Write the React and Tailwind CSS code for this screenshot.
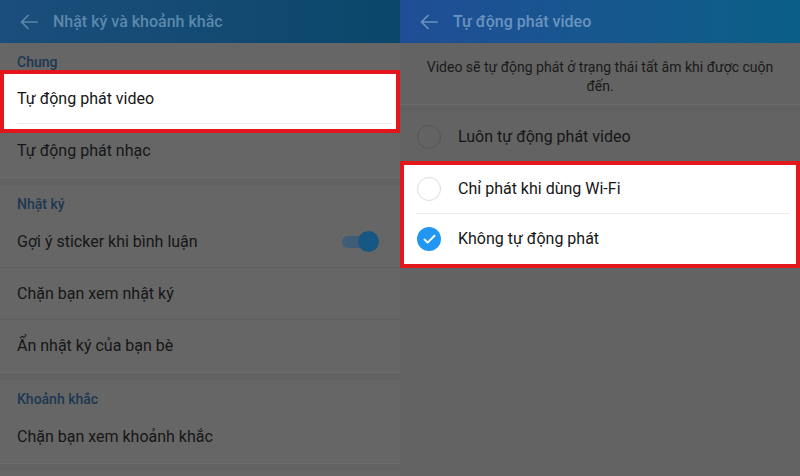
import { Check } from 'lucide-react'

const font = { fontFamily: 'Roboto, "Noto Sans", sans-serif' }

function BackArrow() {
  return (
    <svg width="18" height="16" viewBox="0 0 18 16" fill="none" stroke="currentColor" strokeWidth="1.7" strokeLinecap="round" strokeLinejoin="round">
      <path d="M17 8H1.5M8 1.5 1.5 8 8 14.5" />
    </svg>
  )
}

function Header({ title, tone }) {
  return (
    <div className={`flex h-[43px] shrink-0 items-center pl-[20px] ${tone}`}>
      <BackArrow />
      <span className="ml-[15px] text-[16px] font-medium">{title}</span>
    </div>
  )
}

function SectionLabel({ children, h }) {
  return (
    <div className={`${h} pl-[17px] pt-[9px] text-[14px] font-medium leading-5 text-[#1d3853]`}>{children}</div>
  )
}

function Row({ label, divider, children }) {
  return (
    <div className={`flex h-[52px] items-center justify-between pl-[17px] pr-[21px] ${divider ? 'border-b border-[#5f5f5f]' : ''}`}>
      <span className="text-[16px] text-[#161616]">{label}</span>
      {children}
    </div>
  )
}

function Gap() {
  return <div className="h-[8px] border-t border-[#6c6c6c] bg-[#626262]" />
}

function Radio({ checked, light }) {
  if (checked) {
    return (
      <span className="flex h-[24px] w-[24px] items-center justify-center rounded-full bg-[#2196f3]">
        <Check size={15} strokeWidth={3} className="text-white" />
      </span>
    )
  }
  return (
    <span className={`h-[24px] w-[24px] rounded-full border-[1.5px] ${light ? 'border-[#dcdcdc]' : 'border-[#555555]'}`} />
  )
}

function LeftPanel() {
  return (
    <div className="flex w-[400px] flex-col bg-[#666666]">
      <Header title="Nhật ký và khoảnh khắc" tone="bg-gradient-to-r from-[#1b4e7c] to-[#0a476b] text-[#5c88ab]" />
      <SectionLabel h="h-[27px]">Chung</SectionLabel>

      <div className="-mb-[8px] h-[63px] border-4 border-[#e2161b] bg-white">
        <div className="ml-[13px] mr-[3px] flex h-[50px] items-center border-b border-[#ececec]">
          <span className="text-[16px] text-[#161616]">Tự động phát video</span>
        </div>
      </div>
      <Row label="Tự động phát nhạc" />
      <Gap />

      <SectionLabel h="h-[31px]">Nhật ký</SectionLabel>
      <Row label="Gợi ý sticker khi bình luận" divider>
        <div className="relative flex h-[21px] w-[37px] items-center">
          <div className="h-[12px] w-[30px] rounded-full bg-[#3f5d76]" />
          <div className="absolute right-0 top-0 h-[21px] w-[21px] rounded-full bg-[#175783]" />
        </div>
      </Row>
      <Row label="Chặn bạn xem nhật ký" divider />
      <Row label="Ẩn nhật ký của bạn bè" />
      <Gap />

      <SectionLabel h="h-[31px]">Khoảnh khắc</SectionLabel>
      <Row label="Chặn bạn xem khoảnh khắc" />
      <Gap />
    </div>
  )
}

function RightPanel() {
  return (
    <div className="flex w-[400px] flex-col bg-[#636363]">
      <Header title="Tự động phát video" tone="bg-gradient-to-r from-[#1f4e96] to-[#0a5f87] text-[#6a93bf]" />
      <p className="h-[61px] px-[16px] pt-[15px] text-center text-[14px] leading-[19px] text-[#1a1a1a]">
        Video sẽ tự động phát ở trạng thái tất âm khi được cuộn
        <br />
        đến.
      </p>
      <div className="h-[8px] border-t border-[#6a6a6a] bg-[#606060]" />

      <div className="flex h-[50px] items-center pl-[17px]">
        <Radio />
        <span className="ml-[17px] text-[16px] text-[#161616]">Luôn tự động phát video</span>
      </div>

      <div className="-mt-[1px] h-[107px] border-4 border-[#e2161b] bg-white">
        <div className="ml-[12px] mr-[6px] flex h-[49px] items-center border-b border-[#ececec] pl-[1px]">
          <Radio light />
          <span className="ml-[17px] text-[16px] text-[#161616]">Chỉ phát khi dùng Wi-Fi</span>
        </div>
        <div className="ml-[13px] flex h-[50px] items-center">
          <Radio checked />
          <span className="ml-[17px] text-[16px] text-[#161616]">Không tự động phát</span>
        </div>
      </div>
    </div>
  )
}

export default function App() {
  return (
    <div className="flex h-[476px] w-[800px] overflow-hidden" style={font}>
      <LeftPanel />
      <RightPanel />
    </div>
  )
}
